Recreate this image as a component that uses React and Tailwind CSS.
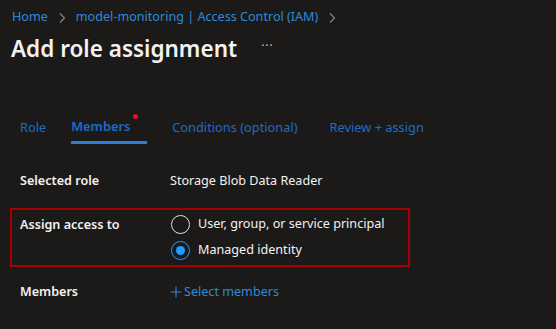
export default function App() {
  return (
    <div className="h-[329px] w-[556px] overflow-hidden bg-[#1b1a19] font-['Noto_Sans',sans-serif] text-[#f3f2f1]">
      <div className="flex h-[33px] items-center gap-[10px] pl-[12px] pt-[2px] text-[12.6px] text-[#2e8ad8]">
        <span>Home</span>
        <svg width="8" height="12" viewBox="0 0 8 12" className="text-[#8a8886]">
          <path d="M2 1.5 L6.5 6 L2 10.5" fill="none" stroke="currentColor" strokeWidth="1.1" />
        </svg>
        <span>model-monitoring | Access Control (IAM)</span>
        <svg width="8" height="12" viewBox="0 0 8 12" className="text-[#8a8886]">
          <path d="M2 1.5 L6.5 6 L2 10.5" fill="none" stroke="currentColor" strokeWidth="1.1" />
        </svg>
      </div>
      <div className="flex h-[32px] items-center pl-[11px]">
        <h1 className="text-[22.5px] font-semibold leading-none">Add role assignment</h1>
        <span className="ml-[24px] pb-[6px] text-[12px] tracking-[1px] text-[#c8c6c4]">···</span>
      </div>

      <div className="mt-[46px] flex h-[33px] items-end gap-[25px] pl-[20px] text-[12.8px] text-[#1b6cc8]">
        <div className="pb-[7px]">Role</div>
        <div className="relative border-b-[3px] border-[#2b7fd4] pb-[5px] pr-[17px] font-semibold">
          Members
          <span className="absolute right-[9px] top-[-3px] h-[5px] w-[5px] rounded-full bg-[#e81123]" />
        </div>
        <div className="pb-[7px]">Conditions (optional)</div>
        <div className="pb-[7px] pl-[7px]">Review + assign</div>
      </div>

      <div className="mt-[28px] flex items-center pl-[20px] text-[12.6px]">
        <div className="w-[150px] font-semibold">Selected role</div>
        <div>Storage Blob Data Reader</div>
      </div>

      <div className="ml-[10px] mt-[17px] flex w-[400px] border-2 border-[#a80000] pb-[5px] pl-[8px] pt-[5px] text-[12.6px]">
        <div className="w-[151px] pt-[1px] font-semibold">Assign access to</div>
        <div className="flex flex-col gap-[7px]">
          <label className="flex items-center gap-[8px]">
            <span className="h-[19px] w-[19px] rounded-full border border-[#e1dfdd]" />
            <span>User, group, or service principal</span>
          </label>
          <label className="flex items-center gap-[8px]">
            <span className="flex h-[19px] w-[19px] items-center justify-center rounded-full border border-[#2899f5]">
              <span className="h-[9px] w-[9px] rounded-full bg-[#2899f5]" />
            </span>
            <span>Managed identity</span>
          </label>
        </div>
      </div>

      <div className="mt-[16px] flex items-center pl-[20px] text-[12.6px]">
        <div className="w-[150px] font-semibold">Members</div>
        <div className="flex items-center gap-[2px] text-[#2e8ad8]">
          <svg width="12" height="12" viewBox="0 0 12 12">
            <path d="M6 0.5 V11.5 M0.5 6 H11.5" stroke="currentColor" strokeWidth="1.1" />
          </svg>
          <span>Select members</span>
        </div>
      </div>
    </div>
  );
}
